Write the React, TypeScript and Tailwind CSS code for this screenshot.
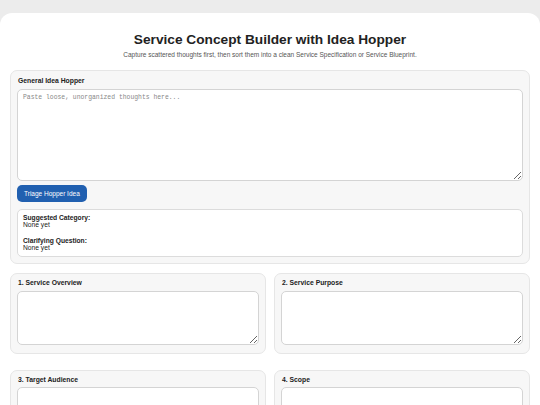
import React from "react";

function Field({ label }: { label: string }) {
  return (
    <div className="rounded-[7px] border border-[#e6e6e6] bg-[#f7f7f7] px-[6px] pt-[4px] pb-[8px]">
      <div className="ml-[1px] text-[6.8px] font-bold leading-[9px] text-[#222] mb-[3.5px]">{label}</div>
      <textarea className="block w-full h-[54px] rounded-[5px] border border-[#d4d4d4] bg-white resize-y outline-none" />
    </div>
  );
}

export default function App() {
  return (
    <div className="min-h-[405px] bg-[#ececec] pt-[13px]" style={{ fontFamily: '"Liberation Sans", Arial, sans-serif' }}>
      <div className="bg-white rounded-t-[12px] mx-0 px-[10px] pt-[19px] pb-[20px]">
        <h1 className="text-center text-[13.7px] font-bold leading-[16px] text-[#222]">Service Concept Builder with Idea Hopper</h1>
        <p className="text-center text-[6.5px] leading-[10px] text-[#555] mt-[2px]">
          Capture scattered thoughts first, then sort them into a clean Service Specification or Service Blueprint.
        </p>
        <div className="mt-[10px] rounded-[7px] border border-[#e6e6e6] bg-[#f7f7f7] px-[6px] pt-[5px] pb-[6px]">
          <div className="ml-[1px] text-[6.8px] font-bold leading-[9px] text-[#222] mb-[3.5px]">General Idea Hopper</div>
          <textarea
            placeholder="Paste loose, unorganized thoughts here..."
            className="block w-full h-[92px] rounded-[5px] border border-[#d4d4d4] bg-white resize-y outline-none px-[5px] py-[4px] text-[6.4px] leading-[8px] placeholder:text-[#888]"
            style={{ fontFamily: '"Liberation Mono", "DejaVu Sans Mono", monospace' }}
          />
          <button className="block mt-[4.5px] h-[17px] px-[7px] rounded-[5px] bg-[#2160b0] text-white text-[6.5px] leading-[17px]">
            Triage Hopper Idea
          </button>
          <div className="mt-[7px] rounded-[5px] border border-[#dcdcdc] bg-white px-[5px] pt-[4px] h-[48px] text-[6.7px] leading-[7px] text-[#222]">
            <div className="font-bold">Suggested Category:</div>
            <div>None yet</div>
            <div className="font-bold mt-[9px]">Clarifying Question:</div>
            <div>None yet</div>
          </div>
        </div>
        <div className="mt-[9px] grid grid-cols-2 gap-x-[8px] gap-y-[16px]">
          <Field label="1. Service Overview" />
          <Field label="2. Service Purpose" />
          <Field label="3. Target Audience" />
          <Field label="4. Scope" />
        </div>
      </div>
    </div>
  );
}
